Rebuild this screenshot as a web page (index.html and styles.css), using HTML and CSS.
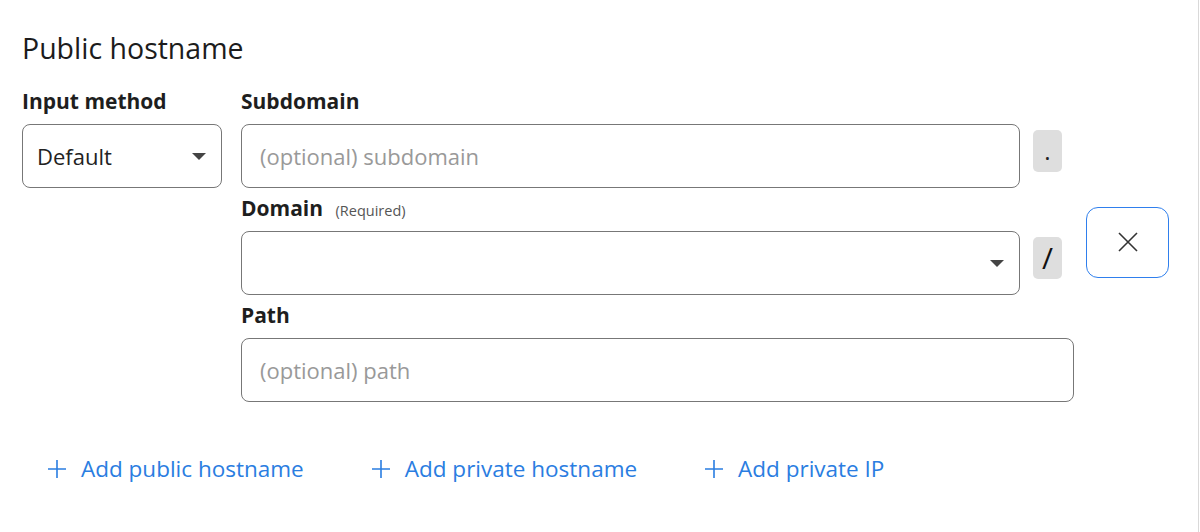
FILE: index.html
```html
<!DOCTYPE html>
<html lang="en">
<head>
    <meta charset="UTF-8">
    <meta name="viewport" content="width=device-width, initial-scale=1.0">
    <title>Public hostname</title>
    <link rel="stylesheet" href="styles.css">
</head>
<body>
    <div class="panel">
        <h2 class="title">Public hostname</h2>

        <div class="hostname-form">
            <div class="method-col">
                <label class="field-label">Input method</label>
                <div class="select">
                    <span>Default</span>
                    <span class="caret"></span>
                </div>
            </div>

            <div class="host-col">
                <div class="host-fields">
                    <label class="field-label">Subdomain</label>
                    <div class="field-row">
                        <div class="input placeholder">(optional) subdomain</div>
                        <span class="sep">.</span>
                    </div>

                    <label class="field-label gap-top">Domain <small>(Required)</small></label>
                    <div class="field-row">
                        <div class="select wide">
                            <span></span>
                            <span class="caret"></span>
                        </div>
                        <span class="sep slash">/</span>
                    </div>

                    <label class="field-label gap-top">Path</label>
                    <div class="input placeholder">(optional) path</div>
                </div>

                <button class="remove-btn" type="button" aria-label="Remove">
                    <svg width="20" height="20" viewBox="0 0 20 20">
                        <path d="M1 1 L19 19 M19 1 L1 19" stroke="#333" stroke-width="1.6" fill="none"/>
                    </svg>
                </button>
            </div>
        </div>

        <div class="add-links">
            <a class="add-link" href="#">
                <svg width="18" height="18" viewBox="0 0 18 18"><path d="M9 0 V18 M0 9 H18" stroke="currentColor" stroke-width="1.6"/></svg>
                Add public hostname
            </a>
            <a class="add-link" href="#">
                <svg width="18" height="18" viewBox="0 0 18 18"><path d="M9 0 V18 M0 9 H18" stroke="currentColor" stroke-width="1.6"/></svg>
                Add private hostname
            </a>
            <a class="add-link" href="#">
                <svg width="18" height="18" viewBox="0 0 18 18"><path d="M9 0 V18 M0 9 H18" stroke="currentColor" stroke-width="1.6"/></svg>
                Add private IP
            </a>
        </div>
    </div>
</body>
</html>
```

FILE: styles.css
```css
body {
    margin: 0;
    font-family: "Open Sans", Arial, sans-serif;
    color: #222;
    background: #fff;
}
.panel {
    width: 1199px;
    height: 532px;
    box-sizing: border-box;
    padding: 32px 0 0 22px;
    border-right: 1px solid #d9d9d9;
}
.title {
    margin: 0;
    font-size: 28.5px;
    font-weight: 500;
    line-height: 32px;
    color: #1c1c1c;
}
.hostname-form {
    display: flex;
    gap: 19px;
    margin-top: 25px;
}
.method-col {
    width: 200px;
}
.field-label {
    display: block;
    height: 24px;
    font-size: 21px;
    font-weight: 700;
    line-height: 24px;
    margin-bottom: 11px;
    color: #1e1e1e;
}
.field-label small {
    font-size: 14.5px;
    line-height: 1;
    font-weight: 400;
    color: #555;
    margin-left: 7px;
}
.gap-top {
    margin-top: 8px;
}
.select,
.input {
    box-sizing: border-box;
    height: 64px;
    border: 1px solid #777;
    border-radius: 8px;
    display: flex;
    align-items: center;
    padding: 0 14px;
    font-size: 22px;
}
.select {
    justify-content: space-between;
    padding-right: 15px;
}
.caret {
    width: 0;
    height: 0;
    border-left: 7px solid transparent;
    border-right: 7px solid transparent;
    border-top: 7px solid #444;
}
.placeholder {
    color: #999;
    padding-left: 18px;
}
.host-col {
    display: flex;
    align-items: center;
    gap: 12px;
}
.host-fields {
    width: 833px;
}
.field-row {
    display: flex;
    align-items: center;
    gap: 13px;
    padding-right: 12px;
}
.field-row .input,
.field-row .select {
    flex: 1;
}
.sep {
    width: 29px;
    height: 42px;
    margin-top: -11px;
    background: #dedede;
    border-radius: 5px;
    display: flex;
    align-items: center;
    justify-content: center;
    font-size: 24px;
    color: #222;
}
.slash {
    font-size: 30px;
    color: #111;
}
.remove-btn {
    width: 83px;
    height: 71px;
    margin-bottom: 7px;
    background: #fff;
    border: 1.5px solid #2f7fed;
    border-radius: 12px;
    display: flex;
    align-items: center;
    justify-content: center;
    cursor: pointer;
}
.add-links {
    display: flex;
    gap: 68px;
    margin-top: 51px;
    padding-left: 26px;
}
.add-link {
    display: flex;
    align-items: center;
    gap: 15px;
    font-size: 22.5px;
    color: #2a7de1;
    text-decoration: none;
}
```
